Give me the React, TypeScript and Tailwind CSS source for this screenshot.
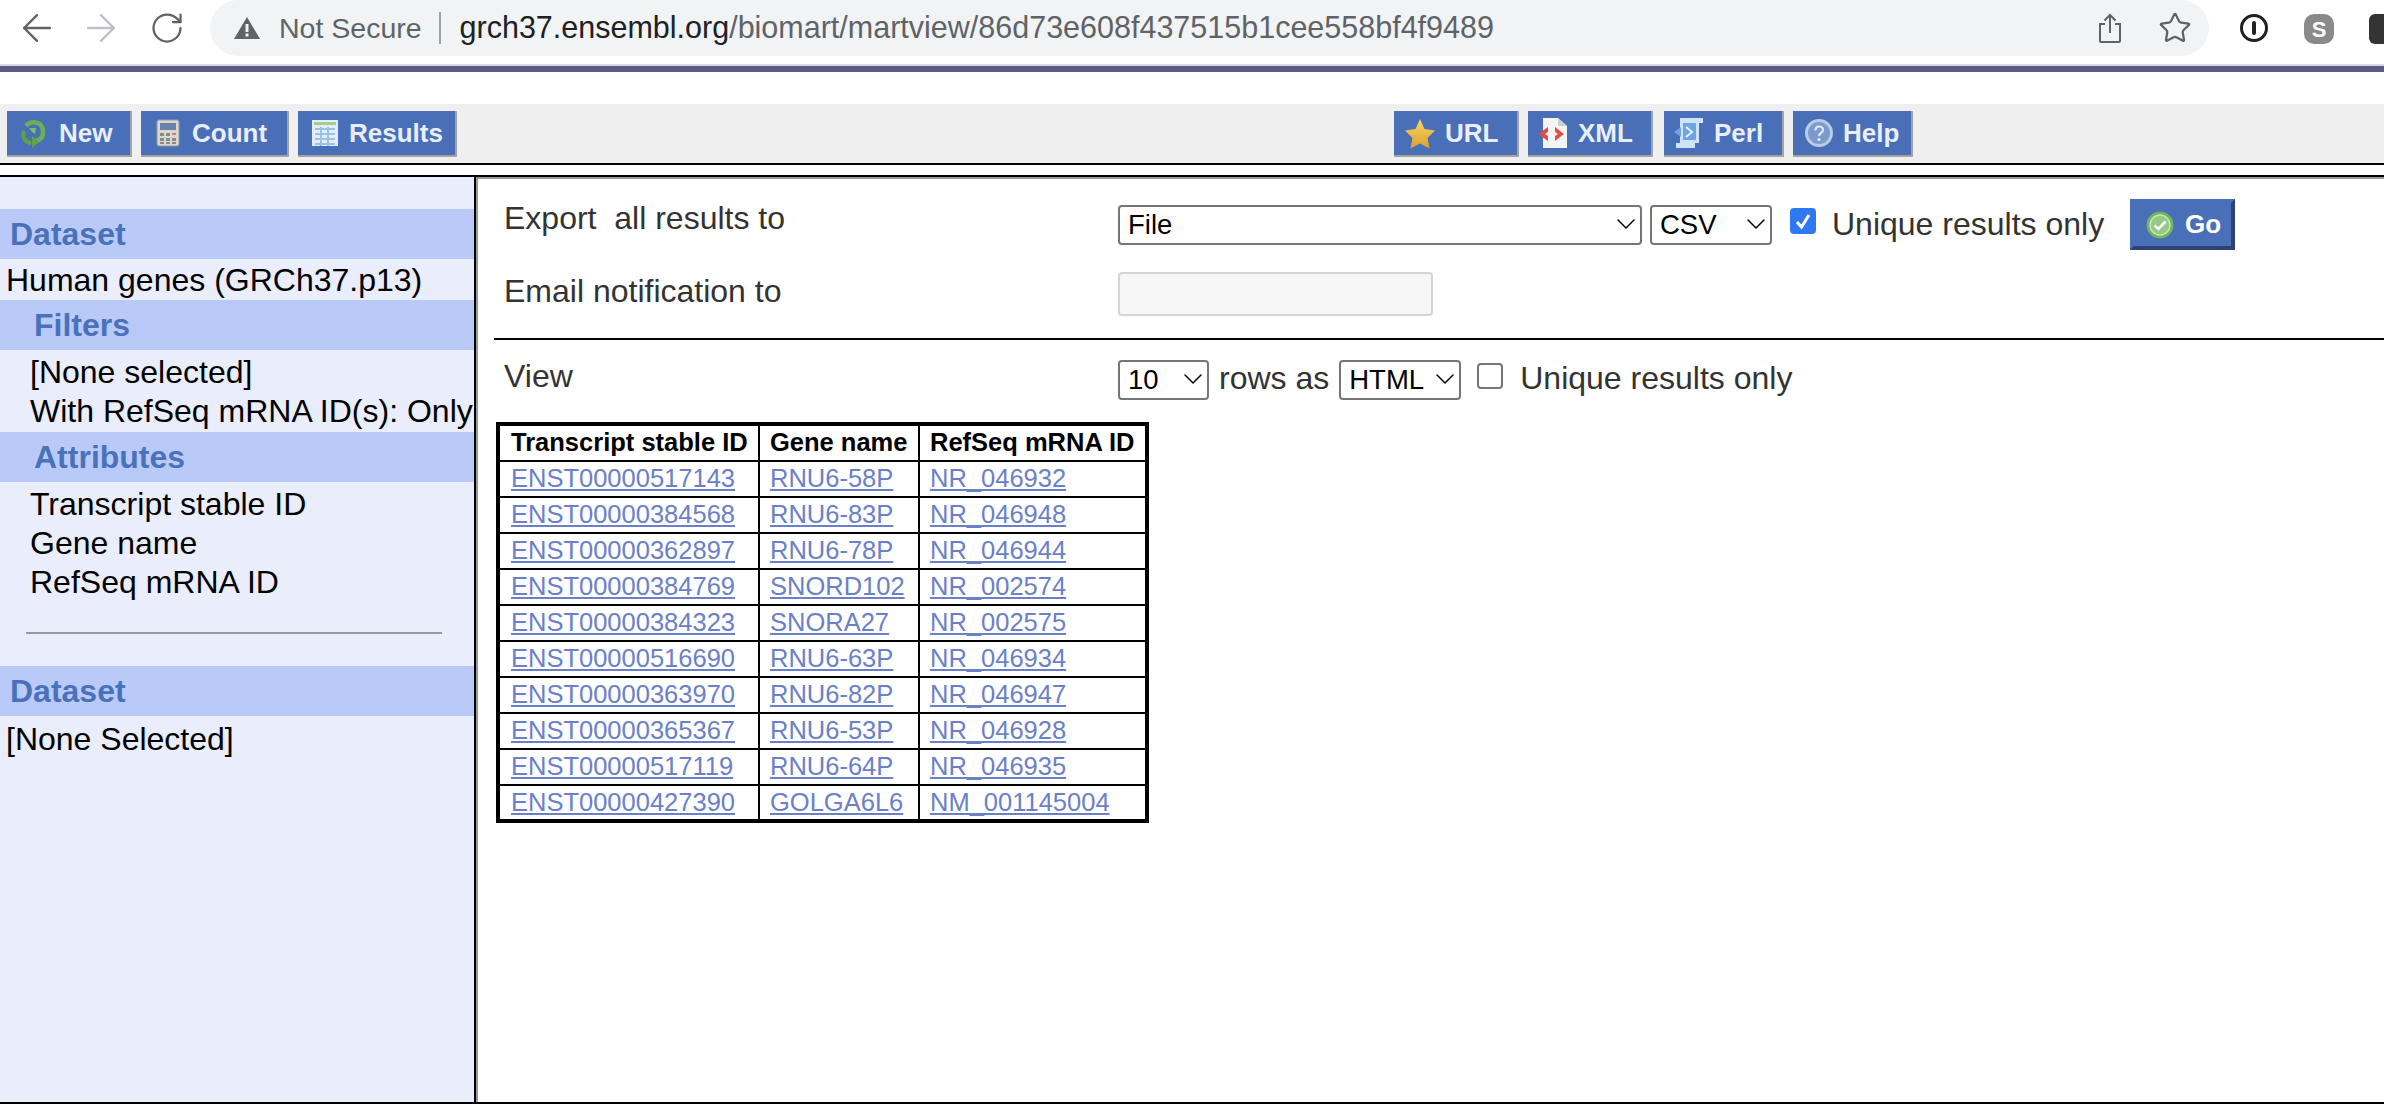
import React from 'react';
import { ArrowLeft, ArrowRight, RotateCw, Star, ChevronDown } from 'lucide-react';

const rows = [
  ['ENST00000517143', 'RNU6-58P', 'NR_046932'],
  ['ENST00000384568', 'RNU6-83P', 'NR_046948'],
  ['ENST00000362897', 'RNU6-78P', 'NR_046944'],
  ['ENST00000384769', 'SNORD102', 'NR_002574'],
  ['ENST00000384323', 'SNORA27', 'NR_002575'],
  ['ENST00000516690', 'RNU6-63P', 'NR_046934'],
  ['ENST00000363970', 'RNU6-82P', 'NR_046947'],
  ['ENST00000365367', 'RNU6-53P', 'NR_046928'],
  ['ENST00000517119', 'RNU6-64P', 'NR_046935'],
  ['ENST00000427390', 'GOLGA6L6', 'NM_001145004'],
];

const NewIcon = () => (
  <svg width="25" height="30" viewBox="0 0 25 30" className="blur-[0.5px]">
    <path d="M5 8C9 3 21 2 22 13C23 21 16 24 11 23" fill="none" stroke="#6cae57" strokeWidth="4.5" />
    <path d="M3 13C1 19 4 24 10 25" fill="none" stroke="#5fa24c" strokeWidth="4" />
    <path d="M8 10H15L14 16L11 14Z" fill="#7dbb68" />
    <path d="M11 18L11 30L18 24Z" fill="#5fa24c" />
  </svg>
);

const CountIcon = () => (
  <svg width="24" height="28" viewBox="0 0 24 28" className="blur-[0.5px]">
    <rect x="1" y="1" width="22" height="26" rx="2" fill="#d8d8d2" stroke="#9a9a94" />
    <rect x="4" y="4" width="16" height="7" fill="#6a82a8" />
    <g fill="#8b8b83">
      <rect x="4" y="14" width="4" height="3" />
      <rect x="10" y="14" width="4" height="3" />
      <rect x="4" y="19" width="4" height="3" />
      <rect x="10" y="19" width="4" height="3" />
      <rect x="16" y="19" width="4" height="3" />
      <rect x="4" y="23" width="4" height="2" />
      <rect x="10" y="23" width="4" height="2" />
      <rect x="16" y="23" width="4" height="2" />
    </g>
    <rect x="16" y="14" width="4" height="2" fill="#e0736f" />
  </svg>
);

const ResultsIcon = () => (
  <svg width="26" height="28" viewBox="0 0 26 28" className="blur-[0.5px]">
    <rect x="0" y="1" width="26" height="26" fill="#e4eef8" />
    <rect x="2" y="3" width="22" height="3" fill="#a5cf8c" />
    <path d="M3 10H23M3 15H23M3 20H23M3 25H23M9 8V27M16 8V27" stroke="#9dc0e6" strokeWidth="2" />
  </svg>
);

const UrlIcon = () => (
  <svg width="32" height="31" viewBox="0 0 32 31" className="blur-[0.4px]">
    <defs>
      <linearGradient id="urlStar" x1="0" y1="0" x2="0" y2="1">
        <stop offset="0" stopColor="#f7d566" />
        <stop offset="1" stopColor="#dca22e" />
      </linearGradient>
    </defs>
    <path d="M16 1L20.5 11L31 12.5L23.5 20L25.5 30.5L16 25.5L6.5 30.5L8.5 20L1 12.5L11.5 11Z" fill="url(#urlStar)" />
  </svg>
);

const XmlIcon = () => (
  <svg width="32" height="32" viewBox="0 0 32 32" className="blur-[0.4px]">
    <path d="M6 1H21L30 9V31H6Z" fill="#f4f4f4" />
    <path d="M21 1V9H30Z" fill="#cfcfcf" />
    <path d="M11 10L1 17L11 24V19L8 17L11 15ZM18 10L27 17L18 24V19L21 17L18 15Z" fill="#df4f45" />
  </svg>
);

const PerlIcon = () => (
  <svg width="31" height="32" viewBox="0 0 31 32" className="blur-[0.4px]">
    <path d="M7 1H30V6H26V26H22V31H3V26H7Z" fill="#cfe3f7" />
    <path d="M10 6H23V23H10Z" fill="#6da4e4" />
    <path d="M1 15L8 10V20Z" fill="#6da4e4" />
    <path d="M13 10L19 15L13 20" fill="none" stroke="#e8f0fa" strokeWidth="2" />
  </svg>
);

const HelpIcon = () => (
  <svg width="28" height="28" viewBox="0 0 28 28" className="blur-[0.4px]">
    <circle cx="14" cy="14" r="12.5" fill="#7c9bcd" stroke="#b9cbe6" strokeWidth="3" />
    <path d="M10.5 11.5C10.5 9 12 7.5 14 7.5C16.5 7.5 18 9 18 11C18 14 14 14 14 17" fill="none" stroke="#dfe8f6" strokeWidth="2.2" />
    <circle cx="14" cy="20.5" r="1.6" fill="#dfe8f6" />
  </svg>
);

const GoIcon = () => (
  <svg width="28" height="28" viewBox="0 0 28 28" className="blur-[0.4px]">
    <circle cx="14" cy="14" r="13.5" fill="#6db65b" />
    <circle cx="14" cy="14" r="10" fill="#93cb84" stroke="#c5e2bc" strokeWidth="1.5" />
    <path d="M8.5 14.5L12.5 18L19.5 10.5" fill="none" stroke="#ffffff" strokeWidth="2.6" />
  </svg>
);

const WarningIcon = () => (
  <svg width="26" height="22" viewBox="0 0 26 22">
    <path d="M13 0L26 22H0Z" fill="#5f6368" />
    <rect x="11.5" y="7" width="3" height="8" fill="#f1f3f4" />
    <rect x="11.5" y="16.5" width="3" height="3" fill="#f1f3f4" />
  </svg>
);

const ShareIcon = () => (
  <svg width="24" height="30" viewBox="0 0 24 30" fill="none" stroke="#5f6368" strokeWidth="2">
    <path d="M7 11H2V28C2 28.6 2.4 29 3 29H21C21.6 29 22 28.6 22 28V11H17" />
    <path d="M12 20V2M6.5 7.5L12 2L17.5 7.5" />
  </svg>
);

function ToolButton({ label, icon, width, pad, gap }: { label: string; icon: React.ReactNode; width: string; pad: string; gap: string }) {
  return (
    <button className={`flex h-[46px] items-center bg-[#4a6fb9] border-r-2 border-b-2 border-[#a3a3a3] text-[26px] font-bold text-[#e9eefa] ${width} ${pad} ${gap}`}>
      {icon}
      <span>{label}</span>
    </button>
  );
}

function Band({ children, indent }: { children: React.ReactNode; indent: string }) {
  return <div className={`flex h-[50px] items-center bg-[#bacaf8] text-[32px] font-bold text-[#4a72bb] ${indent}`}>{children}</div>;
}

function Select({ value, width }: { value: string; width: string }) {
  return (
    <div className={`relative h-10 ${width}`}>
      <select className="h-10 w-full appearance-none rounded-[4px] border-2 border-[#767676] bg-white pl-[8px] text-[27.5px] leading-none text-black" defaultValue={value}>
        <option>{value}</option>
      </select>
      <ChevronDown className="pointer-events-none absolute right-0 top-[4px] h-8 w-8 text-black" strokeWidth={1.1} />
    </div>
  );
}

export default function App() {
  return (
    <div className="h-[1118px] w-[2384px] overflow-hidden bg-white font-['Liberation_Sans',Arial,sans-serif]">
      {/* browser bar */}
      <div className="flex h-[64px] bg-white">
        <div className="flex w-[210px] shrink-0 items-start pl-[15px] pt-[6px]">
          <ArrowLeft className="h-11 w-11 text-[#5f6368]" strokeWidth={1.3} />
          <ArrowRight className="ml-[20px] h-11 w-11 text-[#bdc1c6]" strokeWidth={1.3} />
          <RotateCw className="ml-[26px] mt-[4px] h-9 w-9 text-[#5f6368]" strokeWidth={1.5} />
        </div>
        <div className="flex h-[56px] w-[1999px] shrink-0 items-center rounded-[28px] bg-[#f1f3f4] pl-[24px] text-[28.5px]">
          <WarningIcon />
          <span className="ml-[19px] text-[#5f6368]">Not Secure</span>
          <span className="ml-[17px] h-[32px] w-[2px] bg-[#9aa0a6]" />
          <span className="ml-[19px] text-[30.5px] text-[#202124]">grch37.ensembl.org<span className="text-[#5f6368]">/biomart/martview/86d73e608f437515b1cee558bf4f9489</span></span>
          <span className="ml-auto mr-[36px]"><ShareIcon /></span>
          <Star className="mr-[17px] h-[34px] w-[34px] text-[#5f6368]" strokeWidth={1.6} />
        </div>
        <div className="flex flex-1 items-start pl-[31px] pt-[14px]">
          <div className="flex h-[28px] w-[28px] shrink-0 items-center justify-center rounded-full border-[3px] border-[#202124]">
            <span className="h-[14px] w-[4px] rounded-sm bg-[#202124]" />
          </div>
          <div className="ml-[36px] flex h-[30px] w-[30px] shrink-0 items-center justify-center rounded-[10px] bg-[#8a8a8a] text-[22px] font-bold text-white">S</div>
          <div className="ml-[35px] h-[30px] w-[30px] shrink-0 rounded-[6px] bg-[#333333]" />
        </div>
      </div>
      <div className="h-[2px] bg-[#dadce0]" />
      <div className="h-[6px] bg-[#5a5a85]" />
      <div className="h-[32px]" />

      {/* toolbar */}
      <div className="flex h-[59px] bg-[#efefef] pl-[7px] pt-[7px]">
        <div className="flex gap-[9px]">
          <ToolButton label="New" icon={<NewIcon />} width="w-[125px]" pad="pl-[14px]" gap="gap-[13px]" />
          <ToolButton label="Count" icon={<CountIcon />} width="w-[148px]" pad="pl-[15px]" gap="gap-[12px]" />
          <ToolButton label="Results" icon={<ResultsIcon />} width="w-[159px]" pad="pl-[14px]" gap="gap-[11px]" />
        </div>
        <div className="ml-[937px] flex gap-[9px]">
          <ToolButton label="URL" icon={<UrlIcon />} width="w-[125px]" pad="pl-[10px]" gap="gap-[9px]" />
          <ToolButton label="XML" icon={<XmlIcon />} width="w-[125px]" pad="pl-[9px]" gap="gap-[9px]" />
          <ToolButton label="Perl" icon={<PerlIcon />} width="ml-[2px] w-[120px]" pad="pl-[9px]" gap="gap-[10px]" />
          <ToolButton label="Help" icon={<HelpIcon />} width="w-[120px]" pad="pl-[12px]" gap="gap-[10px]" />
        </div>
      </div>
      <div className="h-[2px] bg-black" />
      <div className="h-[10px]" />

      {/* main frame */}
      <div className="flex h-[929px] border-y-2 border-black">
        <aside className="w-[476px] shrink-0 border-r-2 border-black bg-[#e9edfc] pt-[32px] text-[32px] leading-[39px] text-black">
          <Band indent="pl-[10px]">Dataset</Band>
          <div className="flex h-[41px] items-center whitespace-nowrap pl-[6px] pt-[2px]">Human genes (GRCh37.p13)</div>
          <Band indent="pl-[34px]">Filters</Band>
          <div className="whitespace-nowrap pb-[1px] pl-[30px] pt-[3px]">
            <div>[None selected]</div>
            <div>With RefSeq mRNA ID(s): Only</div>
          </div>
          <Band indent="pl-[34px]">Attributes</Band>
          <div className="pl-[30px] pt-[3px]">
            <div>Transcript stable ID</div>
            <div>Gene name</div>
            <div>RefSeq mRNA ID</div>
          </div>
          <div className="ml-[26px] mr-[32px] mt-[30px] h-[2px] bg-[#999999]" />
          <div className="h-[32px]" />
          <Band indent="pl-[10px]">Dataset</Band>
          <div className="flex h-[44px] items-center pl-[6px] pt-[3px]">[None Selected]</div>
        </aside>

        <main className="flex-1 border-l-2 border-t-2 border-[#999999] pl-[16px] text-[32px] leading-[39px] text-[#333333]">
          <div className="flex h-[74px] pt-[20px]">
            <div className="w-[624px] pl-[10px]">Export&nbsp; all results to</div>
            <div className="mt-[5px] flex items-start">
              <Select value="File" width="w-[524px]" />
              <div className="ml-[8px]"><Select value="CSV" width="w-[122px]" /></div>
              <span className="ml-[18px] mt-[4px] flex h-[26px] w-[26px] items-center justify-center rounded-[4px] bg-[#2f78f2]">
                <svg width="18" height="18" viewBox="0 0 18 18"><path d="M3 10L7.5 15L15 3" fill="none" stroke="#ffffff" strokeWidth="3" /></svg>
              </span>
              <span className="ml-[4px] mt-[1px] w-[306px] pl-[12px] leading-[39px]">Unique results only</span>
              <button className="ml-[4px] -mt-[5px] flex h-[51px] w-[105px] items-center border-4 border-b-[#2c4274] border-l-[#4a6fb9] border-r-[#2c4274] border-t-[#4a6fb9] bg-[#4a6fb9] pl-[12px] text-[26px] font-bold text-white">
                <GoIcon />
                <span className="ml-[11px]">Go</span>
              </button>
            </div>
          </div>
          <div className="flex h-[85px] pt-[19px]">
            <div className="w-[624px] pl-[10px]">Email notification to</div>
            <div className="h-[44px] w-[315px] rounded-[4px] border-2 border-[#d4d4d4] bg-[#f7f7f7]" />
          </div>
          <div className="h-[2px] bg-black" />
          <div className="flex h-[57px] items-start pt-[19px]">
            <div className="-mt-[2px] w-[624px] pl-[10px]">View</div>
            <Select value="10" width="w-[91px]" />
            <span className="ml-[10px] whitespace-nowrap">rows as</span>
            <div className="ml-[10px]"><Select value="HTML" width="w-[122px]" /></div>
            <span className="ml-[16px] mt-[4px] h-[26px] w-[26px] rounded-[4px] border-2 border-[#767676] bg-white" />
            <span className="ml-[17px] whitespace-nowrap">Unique results only</span>
          </div>

          <table className="ml-[2px] mt-[25px] table-fixed border-collapse border-4 border-black text-[25.5px] leading-[30px]">
            <colgroup>
              <col className="w-[261px]" />
              <col className="w-[160px]" />
              <col className="w-[228px]" />
            </colgroup>
            <thead>
              <tr className="h-[37px]">
                <th className="border-2 border-black pb-[2px] pl-[11px] text-left font-bold text-black">Transcript stable ID</th>
                <th className="border-2 border-black pb-[2px] pl-[10px] text-left font-bold text-black">Gene name</th>
                <th className="border-2 border-black pb-[2px] pl-[10px] text-left font-bold text-black">RefSeq mRNA ID</th>
              </tr>
            </thead>
            <tbody>
              {rows.map((row) => (
                <tr key={row[0]} className="h-[36px]">
                  {row.map((cell, i) => (
                    <td key={cell} className={`border-2 border-black pb-[2px] ${i === 0 ? 'pl-[11px]' : 'pl-[10px]'}`}>
                      <a className="text-[#6a80c8] underline">{cell}</a>
                    </td>
                  ))}
                </tr>
              ))}
            </tbody>
          </table>
        </main>
      </div>
    </div>
  );
}
